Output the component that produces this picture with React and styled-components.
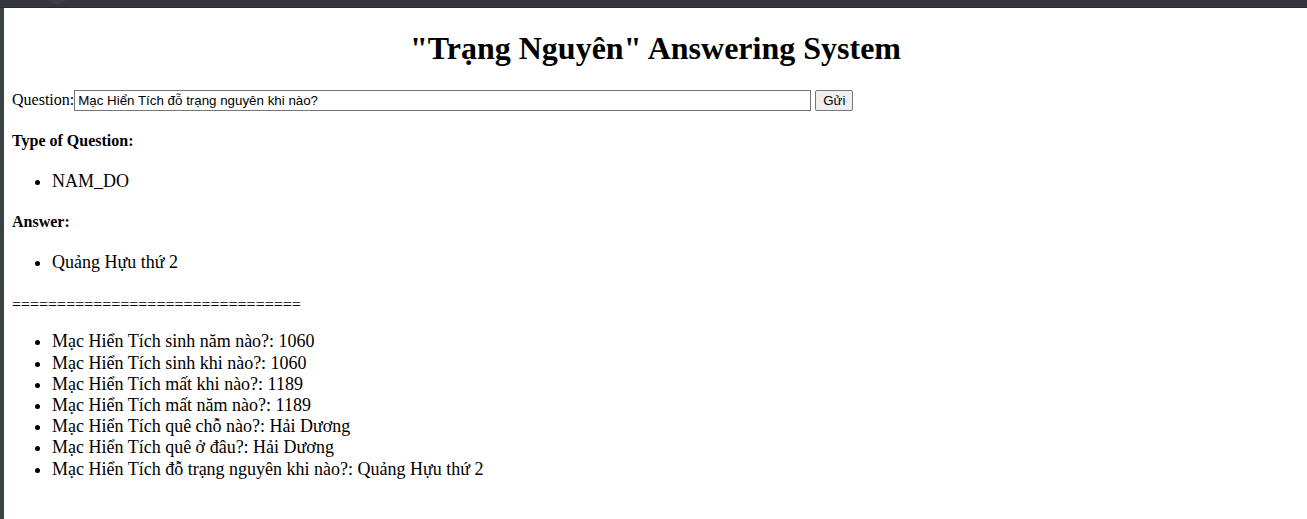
import React from 'react';
import styled, { createGlobalStyle } from 'styled-components';

const GlobalStyle = createGlobalStyle`
  html, body {
    margin: 0;
    padding: 0;
    background: #ffffff;
  }
  body {
    font-family: "Liberation Serif", "Times New Roman", serif;
    font-size: 16px;
    color: #000;
  }
`;

const facts = [
  'Mạc Hiển Tích sinh năm nào?: 1060',
  'Mạc Hiển Tích sinh khi nào?: 1060',
  'Mạc Hiển Tích mất khi nào?: 1189',
  'Mạc Hiển Tích mất năm nào?: 1189',
  'Mạc Hiển Tích quê chỗ nào?: Hải Dương',
  'Mạc Hiển Tích quê ở đâu?: Hải Dương',
  'Mạc Hiển Tích đỗ trạng nguyên khi nào?: Quảng Hựu thứ 2',
];

export default function App() {
  return (
    <>
      <GlobalStyle />
      <Frame>
        <TopBar>
          <TabHint />
        </TopBar>
        <Body>
          <SideBar />
          <Page>
            <Title>"Trạng Nguyên" Answering System</Title>
            <QuestionForm onSubmit={(e) => e.preventDefault()}>
              <label htmlFor="q">Question:</label>
              <QuestionInput id="q" defaultValue="Mạc Hiển Tích đỗ trạng nguyên khi nào?" />
              <SendButton type="submit">Gửi</SendButton>
            </QuestionForm>
            <Heading>Type of Question:</Heading>
            <List>
              <li>NAM_DO</li>
            </List>
            <Heading>Answer:</Heading>
            <List>
              <li>Quảng Hựu thứ 2</li>
            </List>
            <Divider>================================</Divider>
            <List>
              {facts.map((f) => (
                <li key={f}>{f}</li>
              ))}
            </List>
          </Page>
        </Body>
      </Frame>
    </>
  );
}

const Frame = styled.div`
  display: flex;
  flex-direction: column;
  min-height: 100vh;
`;

const TopBar = styled.div`
  height: 8px;
  background: #35363a;
  border-bottom: 1px solid #2a2b2e;
  box-sizing: border-box;
  position: relative;
  overflow: hidden;
`;

const TabHint = styled.div`
  position: absolute;
  left: 46px;
  top: -14px;
  width: 22px;
  height: 18px;
  border-radius: 50%;
  background: #3e3f43;
`;

const Body = styled.div`
  flex: 1;
  display: flex;
`;

const SideBar = styled.div`
  width: 4px;
  flex: none;
  background: #3b4443;
`;

const Page = styled.div`
  flex: 1;
  padding: 0 8px;
`;

const Title = styled.h1`
  text-align: center;
  font-size: 32px;
  font-weight: bold;
  margin: 22px 0 22px;
`;

const QuestionForm = styled.form`
  display: flex;
  align-items: center;
  margin: 0;
  font-size: 16px;
  height: 22px;
`;

const QuestionInput = styled.input`
  width: 737px;
  height: 21px;
  box-sizing: border-box;
  border: 1px solid #767676;
  border-radius: 0;
  padding: 1px 3px;
  font-family: "Liberation Sans", Arial, sans-serif;
  font-size: 13.33px;
  color: #000;
  margin: 0 4px 0 0;
`;

const SendButton = styled.button`
  height: 21px;
  box-sizing: border-box;
  padding: 1px 7px;
  border: 1px solid #767676;
  border-radius: 2px;
  background: #efefef;
  font-family: "Liberation Sans", Arial, sans-serif;
  font-size: 13.33px;
  color: #000;
`;

const Heading = styled.h4`
  font-size: 16px;
  font-weight: bold;
  margin: 21px 0;
`;

const List = styled.ul`
  margin: 16px 0;
  padding-left: 40px;
  font-size: 18px;
  line-height: 21.2px;
`;

const Divider = styled.div`
  font-size: 16px;
  margin: 23px 0 17px;
`;
